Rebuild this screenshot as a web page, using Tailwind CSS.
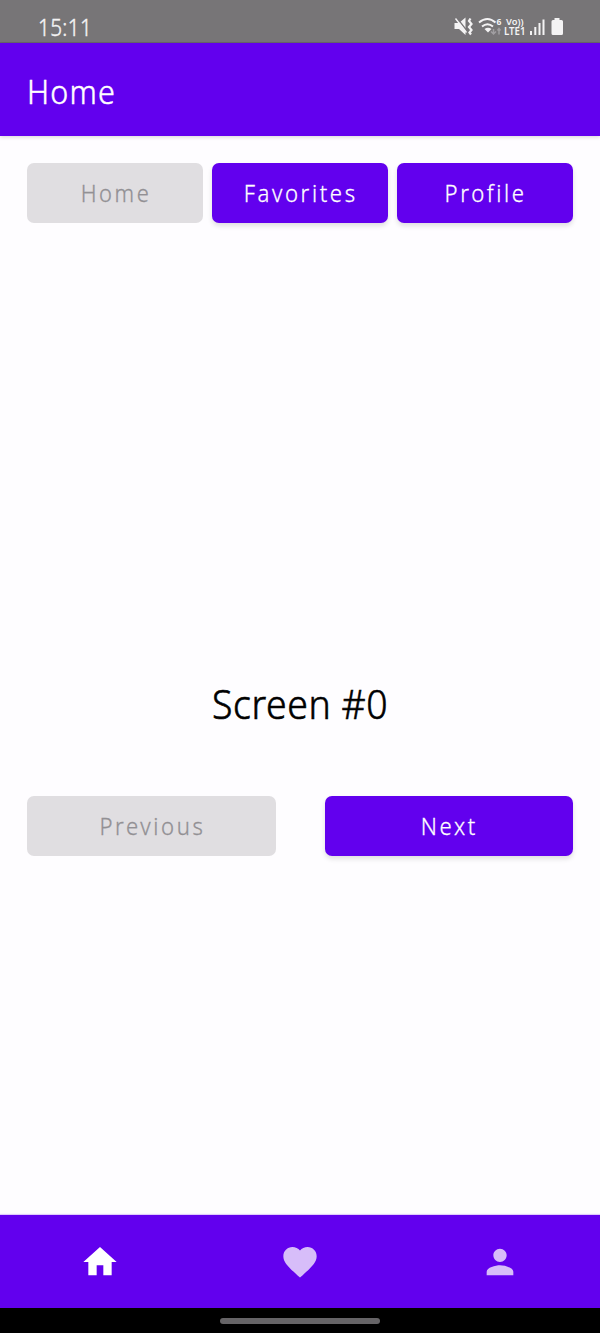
<!DOCTYPE html>
<html lang="en">
<head>
<meta charset="utf-8">
<title>Home</title>
<script src="https://cdn.jsdelivr.net/npm/@tailwindcss/browser@4"></script>
</head>
<body class="font-['Noto_Sans','Open_Sans',sans-serif] font-light">
<div class="flex h-[1333px] w-[600px] flex-col overflow-hidden bg-[#fefdff]">
  <div class="flex h-[43px] shrink-0 items-start justify-between border-b border-[#69656c] bg-[#777577] pr-[36px] pl-[38px]">
    <span class="mt-[11px] inline-block origin-left scale-x-[0.9] text-[23px] leading-8 tracking-[0.4px] text-[#f4f3f4] [-webkit-text-stroke:0.4px]">15:11</span>
    <svg class="mt-[14px] h-[24px] w-[112px]" viewBox="452 14 112 24" fill="#f4f3f4">
      <path d="M454.500 23h4.500l6.500-5.500v17.500l-6.500-6h-4.500z"/>
      <path d="M456.500 17.500l11 14" stroke="#777577" stroke-width="1.400"/>
      <path d="M455.500 18.500l11 14" stroke="#f4f3f4" stroke-width="1.400"/>
      <path d="M470.500 18.500l-1.500 2.500 2.500 3-2.500 3 2.500 3-2 2.500 1.500 2" fill="none" stroke="#f4f3f4" stroke-width="2.200"/>
      <g fill="none" stroke="#f4f3f4" stroke-width="2">
        <path d="M479 22.500q8.500-7 16.500 0M482 26.500q5.500-4.500 11 0"/>
      </g>
      <path d="M484.500 29q3.500-2.500 7 0l-3.500 3.500z"/>
      <path d="M493.500 29v5m-2.500-2.500 2.500 2.500 2.500-2.500M499 34.500v-6m-1.500 2 1.500-2 1.500 2" fill="none" stroke="#a09ea1" stroke-width="1.500"/>
      <text x="496.500" y="25" font-size="8.500" font-weight="700">6</text>
      <text x="506" y="25" font-size="9.500" font-weight="600" textLength="17.500" lengthAdjust="spacingAndGlyphs">Vo))</text>
      <text x="504" y="35" font-size="10" font-weight="600" textLength="21.500" lengthAdjust="spacingAndGlyphs">LTE1</text>
      <path d="M530 31h2v4h-2zM534.300 27h2v8h-2zM538.500 23h2v12h-2zM542.500 19.500h2v15.500h-2z"/>
      <path d="M554.500 18h5v2h2q1.500 0 1.500 1.500v12q0 1.500-1.500 1.500h-8.500q-1.500 0-1.500-1.500v-12q0-1.500 1.500-1.500h1.500z"/>
    </svg>
  </div>
  <header class="z-10 flex h-[93px] shrink-0 items-center bg-[#6200ee] pl-[26px] shadow-[0_1px_4px_rgba(0,0,0,0.16)]">
    <h1 class="mt-[3px] ml-px inline-block origin-left scale-x-[0.925] text-[33px] leading-none tracking-[1.3px] text-white [-webkit-text-stroke:0.5px]">Home</h1>
  </header>
  <main class="flex min-h-0 flex-1 flex-col px-[27px] pt-[27px]">
    <nav class="grid grid-cols-3 gap-[9px] text-[23.500px] text-white [-webkit-text-stroke:0.3px]">
      <button class="flex h-[60px] items-center justify-center rounded-[7px] bg-[#e0dee1] text-[#929094]"><span class="mt-0.5 ml-0.5 inline-block scale-x-[0.93] tracking-[2.8px]">Home</span></button>
      <button class="flex h-[60px] items-center justify-center rounded-[7px] bg-[#6200ee] shadow-[0_3px_5px_rgba(0,0,0,0.12)]"><span class="mt-0.5 ml-0.5 inline-block scale-x-[0.94] tracking-[2.8px]">Favorites</span></button>
      <button class="flex h-[60px] items-center justify-center rounded-[7px] bg-[#6200ee] shadow-[0_3px_5px_rgba(0,0,0,0.12)]"><span class="mt-0.5 ml-0.5 inline-block scale-x-[0.94] tracking-[2.8px]">Profile</span></button>
    </nav>
    <div class="mt-[451px] flex h-[60px] items-center justify-center text-[40px] text-black">
      <p class="scale-x-[0.935] tracking-[0.6px] whitespace-nowrap [-webkit-text-stroke:0.6px]">Screen #0</p>
    </div>
    <div class="mt-[62px] grid grid-cols-2 gap-[49px] text-[23.500px] text-white [-webkit-text-stroke:0.3px]">
      <button class="flex h-[60px] items-center justify-center rounded-[7px] bg-[#e0dee1] text-[#929094]"><span class="mt-0.5 ml-0.5 inline-block scale-x-[0.94] tracking-[2.8px]">Previous</span></button>
      <button class="flex h-[60px] items-center justify-center rounded-[7px] bg-[#6200ee] shadow-[0_3px_5px_rgba(0,0,0,0.12)]"><span class="mt-0.5 ml-0.5 inline-block scale-x-[0.94] tracking-[2.8px]">Next</span></button>
    </div>
  </main>
  <nav class="grid h-[93px] shrink-0 grid-cols-3 place-items-center bg-[#6200ee] shadow-[0_-1px_1px_rgba(98,0,238,0.2)]">
    <svg class="size-10" viewBox="0 0 24 24" fill="#fff"><path d="M10 20v-6h4v6h5v-8h3L12 3 2 12h3v8z"/></svg>
    <svg class="size-10" viewBox="0 0 24 24" fill="#d7bdf9"><path d="M12 21.350l-1.450-1.320C5.400 15.360 2 12.280 2 8.500 2 5.420 4.420 3 7.500 3c1.740 0 3.410.810 4.500 2.090C13.090 3.810 14.760 3 16.500 3 19.580 3 22 5.420 22 8.500c0 3.780-3.400 6.860-8.550 11.540L12 21.350z"/></svg>
    <svg class="size-10" viewBox="0 0 24 24" fill="#d7bdf9"><path d="M12 12c2.210 0 4-1.790 4-4s-1.790-4-4-4-4 1.790-4 4 1.790 4 4 4zm0 2c-2.670 0-8 1.340-8 4v2h16v-2c0-2.660-5.330-4-8-4z"/></svg>
  </nav>
  <div class="flex h-[25px] shrink-0 items-center justify-center bg-black"><div class="h-[6px] w-[160px] rounded-full bg-[#666467]"></div></div>
</div>
</body>
</html>
